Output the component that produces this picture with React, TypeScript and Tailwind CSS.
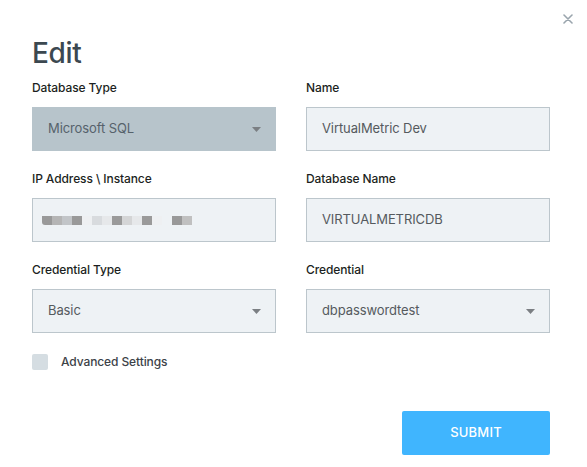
import React from "react";

const FONT = { fontFamily: "Inter, 'Noto Sans', sans-serif" };

// pixelated (blurred-out) IP address blocks
const ipBlocks = [
  "#999999", "#b5b5b5", "#c2c5c8", "#999999", "#eef0f2", "#d8dbde", "#e6e8ea", "#9a9a9a",
  "#d4d5d6", "#e6e8ea", "#9a9a9a", "#eef0f2", "#eef2f5", "#999999", "#c0c0c0",
];

function Caret() {
  return (
    <svg width="9" height="5" viewBox="0 0 9 5" className="shrink-0">
      <path d="M0 0 H9 L4.5 5 Z" fill="#7b7f83" />
    </svg>
  );
}

function Label({ children }: { children: React.ReactNode }) {
  return <div className="text-[12px] leading-[16px] font-medium text-[#1c1f22] mb-[11px] tracking-[-0.1px]">{children}</div>;
}

function Field({ label, value, select, disabled, children }: any) {
  return (
    <div>
      <Label>{label}</Label>
      <div
        className={
          "h-[44px] flex items-center justify-between text-[13px] tracking-[-0.1px] " +
          (disabled
            ? "pl-[16px] pr-[15px] bg-[#b7c4cb] text-[#56626b]"
            : "pl-[15px] pr-[14px] bg-[#eef2f5] border border-[#bcc6cc] text-[#555a5e]")
        }
      >
        {children ?? <span>{value}</span>}
        {select && <Caret />}
      </div>
    </div>
  );
}

export default function App() {
  return (
    <div className="relative w-[587px] h-[467px] bg-white" style={FONT}>
      <button className="absolute top-[14px] right-[14px] w-[10px] h-[10px]">
        <svg width="10" height="10" viewBox="0 0 10 10">
          <path d="M1 1 L9 9 M9 1 L1 9" stroke="#9aa5ad" strokeWidth="1.6" strokeLinecap="round" />
        </svg>
      </button>

      <div className="pt-[37px] pl-[32px] w-[550px]">
        <h1 className="text-[28px] leading-[32px] font-medium text-[#3c4850] tracking-[-0.3px] mb-[11px]">Edit</h1>

        <div className="grid grid-cols-[244px_244px] gap-x-[30px] gap-y-[20px]">
          <Field label="Database Type" value="Microsoft SQL" select disabled />
          <Field label="Name" value="VirtualMetric Dev" />
          <Field label="IP Address \ Instance">
            <div className="flex -ml-[6px] h-[9px] mt-[1px]">
              {ipBlocks.map((c, i) => (
                <div key={i} className={"w-[10px] h-[9px]" + (i === 0 ? " rounded-bl-[3px]" : "")} style={{ background: c }} />
              ))}
            </div>
          </Field>
          <Field label="Database Name" value="VIRTUALMETRICDB" />
          <Field label="Credential Type" value="Basic" select />
          <Field label="Credential" value="dbpasswordtest" select />
        </div>

        <label className="flex items-center gap-[13px] mt-[21px]">
          <span className="w-[16px] h-[16px] rounded-[2px] bg-[#d5dde2]" />
          <span className="text-[12px] leading-[16px] font-medium text-[#3c4248] tracking-[-0.1px]">Advanced Settings</span>
        </label>

        <div className="flex justify-end mt-[41px]">
          <button className="w-[148px] h-[44px] rounded-[2px] bg-[#40b5fe] text-white text-[13px] font-medium tracking-[0.2px]">
            SUBMIT
          </button>
        </div>
      </div>
    </div>
  );
}
